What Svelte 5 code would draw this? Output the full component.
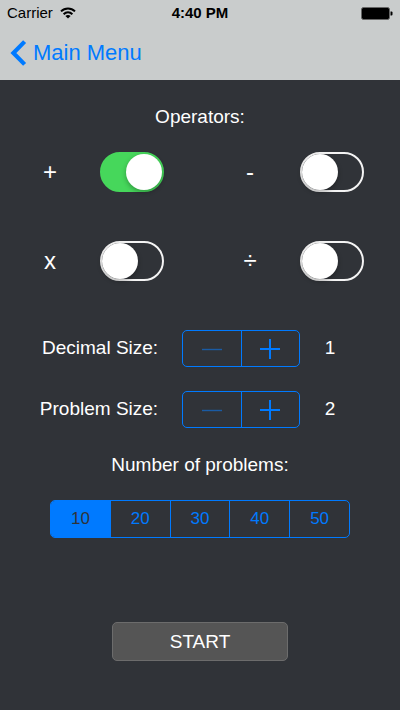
<script>
  let operators = $state([
    { id: 'add', symbol: '+', enabled: true },
    { id: 'subtract', symbol: '-', enabled: false },
    { id: 'multiply', symbol: 'x', enabled: false },
    { id: 'divide', symbol: '÷', enabled: false }
  ])

  let sizes = $state([
    { id: 'decimal', label: 'Decimal Size:', value: 1, min: 1 },
    { id: 'problem', label: 'Problem Size:', value: 2, min: 2 }
  ])

  const counts = [10, 20, 30, 40, 50]
  let count = $state(10)
</script>

<div class="screen">
  <header>
    <div class="status">
      <span class="carrier">
        Carrier
        <svg width="16" height="12" viewBox="0 0 16 12" fill="none" stroke="#000" stroke-width="2">
          <path d="M1 4.4C5 0.4 11 0.4 15 4.4" />
          <path d="M3.6 7.2C6.2 4.7 9.8 4.7 12.4 7.2" />
          <path d="M8 11.6L5.4 9C6.8 7.7 9.2 7.7 10.6 9Z" fill="#000" stroke="none" />
        </svg>
      </span>
      <span class="time">4:40 PM</span>
      <svg class="battery" width="32" height="13" viewBox="0 0 32 13">
        <rect x="0.5" y="0.5" width="28" height="12" rx="2" fill="#000" stroke="#666" />
        <path d="M29.5 4.5h1q1 0 1 1v2q0 1-1 1h-1z" fill="#000" />
      </svg>
    </div>
    <nav>
      <a href="#menu">
        <svg width="17" height="26" viewBox="0 0 17 26" fill="none" stroke="currentColor" stroke-width="4.2">
          <path d="M14.6 1.6L3.4 13L14.6 24.4" />
        </svg>
        Main Menu
      </a>
    </nav>
  </header>

  <main>
    <h2>Operators:</h2>
    <div class="operators">
      {#each operators as op (op.id)}
        <label for={op.id}>{op.symbol}</label>
        <input id={op.id} class="switch" type="checkbox" role="switch" bind:checked={op.enabled} />
      {/each}
    </div>

    <div class="sizes">
      {#each sizes as size (size.id)}
        <span class="size-label" id={size.id}>{size.label}</span>
        <div class="stepper" role="group" aria-labelledby={size.id}>
          <button aria-label="Decrease" disabled={size.value <= size.min} onclick={() => size.value--}>
            <svg width="20" height="20" viewBox="0 0 20 20" stroke="currentColor" stroke-width="1.4">
              <path d="M0 10.5H20" />
            </svg>
          </button>
          <button aria-label="Increase" onclick={() => size.value++}>
            <svg width="20" height="20" viewBox="0 0 20 20" stroke="currentColor" stroke-width="2">
              <path d="M0 10H20M10 0V20" />
            </svg>
          </button>
        </div>
        <output>{size.value}</output>
      {/each}
    </div>

    <h2 id="count-title">Number of problems:</h2>
    <div class="segments" role="radiogroup" aria-labelledby="count-title">
      {#each counts as n}
        <label class:selected={count === n}>
          <input type="radio" name="count" value={n} bind:group={count} />
          {n}
        </label>
      {/each}
    </div>

    <button class="start">START</button>
  </main>
</div>

<style>
  :global(body) {
    background: #303338;
  }

  .screen {
    min-height: 100vh;
    background: #303338;
    color: #fff;
    font-family: "Liberation Sans", Arial, sans-serif;
    font-size: 19px;
    line-height: 24px;
  }

  header {
    background: #c9cccc;
    color: #000;
  }

  .status {
    display: grid;
    grid-template-columns: 1fr auto 1fr;
    align-items: center;
    height: 26px;
    padding: 0 7px;
    font-size: 15px;
  }

  .carrier {
    display: flex;
    align-items: center;
    gap: 7px;
  }

  .time {
    font-weight: bold;
  }

  .battery {
    justify-self: end;
  }

  nav {
    display: flex;
    align-items: center;
    height: 54px;
    padding: 0 10px;
  }

  nav a {
    display: flex;
    align-items: center;
    gap: 6px;
    color: #007aff;
    font-size: 22px;
    text-decoration: none;
  }

  main {
    display: flex;
    flex-direction: column;
    align-items: center;
    padding: 25px 0 40px;
  }

  h2 {
    margin: 0 0 23px;
    font-size: 19px;
    font-weight: normal;
  }

  .operators {
    display: grid;
    grid-template-columns: repeat(4, 1fr);
    row-gap: 49px;
    align-items: center;
    width: 100%;
    margin-bottom: 49px;
  }

  .operators label {
    font-size: 24px;
    text-align: center;
  }

  .switch {
    appearance: none;
    box-sizing: border-box;
    width: 64px;
    height: 40px;
    margin: 0;
    border: 2px solid #f4f4f4;
    border-radius: 20px;
  }

  .switch::before {
    content: "";
    display: block;
    width: 36px;
    height: 36px;
    border-radius: 50%;
    background: #fff;
    box-shadow: 0 2px 5px rgba(0, 0, 0, 0.3);
  }

  .switch:checked {
    border-color: #46d75b;
    background: #46d75b;
  }

  .switch:checked::before {
    margin-left: auto;
  }

  .sizes {
    display: grid;
    grid-template-columns: auto 118px 12px;
    gap: 24px;
    align-items: center;
    margin-bottom: 25px;
    /* the value column is narrower than the labels, so the block leans left */
    padding-right: 24px;
  }

  .size-label,
  output {
    padding-bottom: 2px;
  }

  .size-label {
    text-align: right;
  }

  .stepper {
    display: flex;
    box-sizing: border-box;
    height: 37px;
    border: 1px solid #007aff;
    border-radius: 5px;
  }

  .stepper button {
    display: flex;
    flex: 1;
    align-items: center;
    justify-content: center;
    padding: 0;
    border: 0;
    background: none;
    color: #007aff;
  }

  .stepper button + button {
    border-left: 1px solid #007aff;
  }

  .stepper button:disabled {
    color: #1a5ba4;
  }

  output {
    text-align: center;
  }

  .segments {
    display: flex;
    box-sizing: border-box;
    width: 75%;
    height: 38px;
    margin-bottom: 84px;
    border: 1px solid #007aff;
    border-radius: 5px;
    overflow: hidden;
    color: #007aff;
    font-size: 17px;
  }

  .segments label {
    position: relative;
    display: flex;
    flex: 1;
    align-items: center;
    justify-content: center;
  }

  .segments label + label {
    border-left: 1px solid #007aff;
  }

  .segments .selected {
    background: #007aff;
    color: #303338;
  }

  .segments input {
    position: absolute;
    inset: 0;
    margin: 0;
    opacity: 0;
  }

  .start {
    width: 44%;
    height: 39px;
    padding: 0;
    border: 1px solid #6c6c6c;
    border-radius: 5px;
    background: #555;
    color: #fff;
    font: inherit;
  }
</style>
